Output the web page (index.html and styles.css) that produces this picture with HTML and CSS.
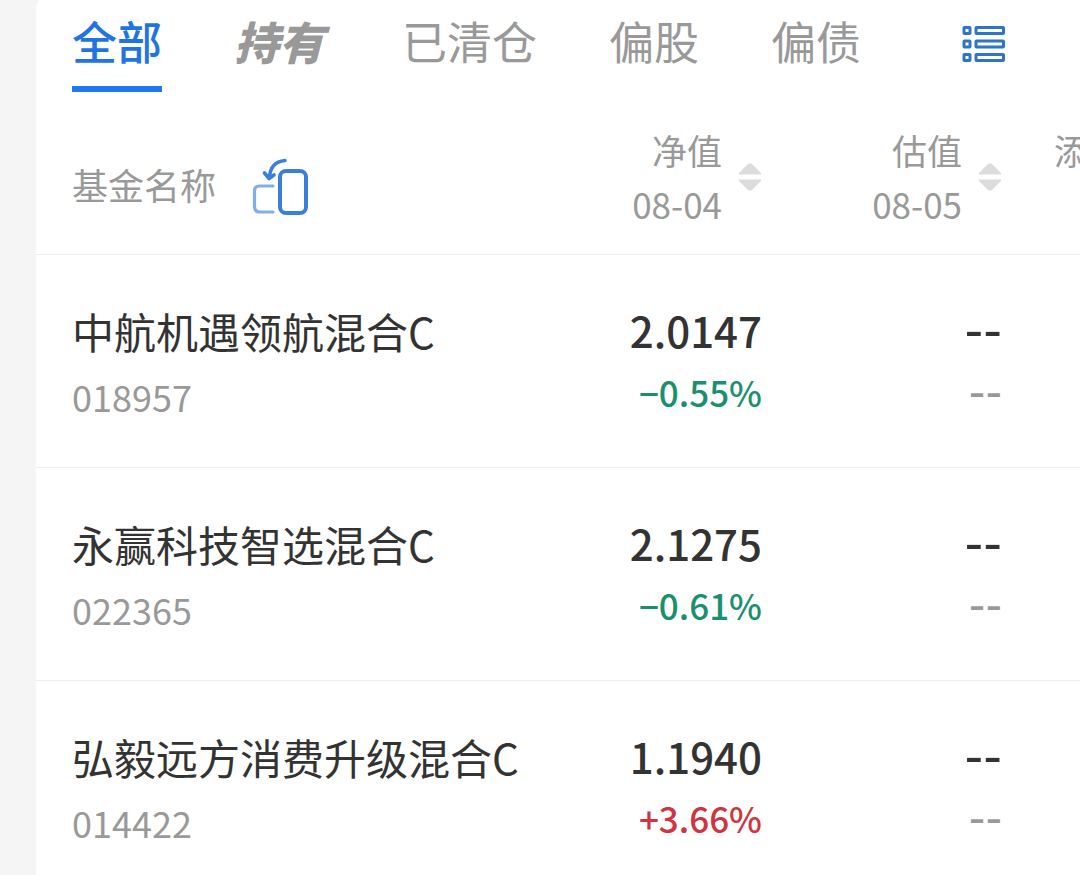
FILE: index.html
```html
<!DOCTYPE html>
<html lang="zh-CN">
<head>
<meta charset="UTF-8">
<meta name="viewport" content="width=device-width, initial-scale=1">
<title>自选基金</title>
<link rel="stylesheet" href="styles.css">
</head>
<body>

<main class="card">
  <nav class="tabs">
    <button type="button" class="tab active">全部</button>
    <button type="button" class="tab hold">持有</button>
    <button type="button" class="tab">已清仓</button>
    <button type="button" class="tab">偏股</button>
    <button type="button" class="tab">偏债</button>
    <button type="button" class="list-btn" aria-label="列表">
      <svg width="44" height="38" viewBox="0 0 44 38" fill="none" stroke="#2f74c8" stroke-width="3">
        <rect x="2" y="2.500" width="6" height="6" rx="0.500"/>
        <rect x="14" y="2.500" width="27.500" height="6" rx="0.500"/>
        <rect x="2" y="16" width="6" height="6" rx="0.500"/>
        <rect x="14" y="16" width="27.500" height="6" rx="0.500"/>
        <rect x="2" y="29.500" width="6" height="6" rx="0.500"/>
        <rect x="14" y="29.500" width="27.500" height="6" rx="0.500"/>
      </svg>
    </button>
  </nav>

  <table class="funds">
    <thead>
      <tr>
        <th class="col-name">
          <div class="name-head">
            <span>基金名称</span>
            <button type="button" class="rotate-btn" aria-label="横屏">
              <svg width="58" height="64" viewBox="0 0 58 64" fill="none" stroke-linecap="round" stroke-linejoin="round">
                <path d="M21 34H7.500Q2.500 34 2.500 39V54Q2.500 60 7.500 60H21" stroke="#84aeea" stroke-width="3.200"/>
                <rect x="28" y="19" width="26" height="42" rx="6" stroke="#3b7fdc" stroke-width="4"/>
                <path d="M33 8.500Q18 10 17.500 26M12.500 21L17 26.500L22 23" stroke="#3b7fdc" stroke-width="3.600"/>
              </svg>
            </button>
          </div>
        </th>
        <th class="col-num">
          <div class="num-head">
            <span>净值<br>08-04</span>
            <button type="button" class="sort-btn" aria-label="净值排序">
              <svg width="24" height="30" viewBox="0 0 24 30" fill="#dcdcdc">
                <path d="M1 12.500V11L10 2Q12 0.500 14 2L23 11V12.500Z"/>
                <path d="M1 17.500V19L10 28Q12 29.500 14 28L23 19V17.500Z"/>
              </svg>
            </button>
          </div>
        </th>
        <th class="col-num">
          <div class="num-head">
            <span>估值<br>08-05</span>
            <button type="button" class="sort-btn" aria-label="估值排序">
              <svg width="24" height="30" viewBox="0 0 24 30" fill="#dcdcdc">
                <path d="M1 12.500V11L10 2Q12 0.500 14 2L23 11V12.500Z"/>
                <path d="M1 17.500V19L10 28Q12 29.500 14 28L23 19V17.500Z"/>
              </svg>
            </button>
          </div>
        </th>
        <th class="col-more">添</th>
      </tr>
    </thead>
    <tbody>
      <tr>
        <td class="col-name">
          <div class="name">中航机遇领航混合C</div>
          <div class="code">018957</div>
        </td>
        <td class="col-num">
          <div class="value">2.0147</div>
          <div class="rate down">−0.55%</div>
        </td>
        <td class="col-num">
          <div class="value empty">--</div>
          <div class="rate empty">--</div>
        </td>
        <td></td>
      </tr>
      <tr>
        <td class="col-name">
          <div class="name">永赢科技智选混合C</div>
          <div class="code">022365</div>
        </td>
        <td class="col-num">
          <div class="value">2.1275</div>
          <div class="rate down">−0.61%</div>
        </td>
        <td class="col-num">
          <div class="value empty">--</div>
          <div class="rate empty">--</div>
        </td>
        <td></td>
      </tr>
      <tr>
        <td class="col-name">
          <div class="name">弘毅远方消费升级混合C</div>
          <div class="code">014422</div>
        </td>
        <td class="col-num">
          <div class="value">1.1940</div>
          <div class="rate up">+3.66%</div>
        </td>
        <td class="col-num">
          <div class="value empty">--</div>
          <div class="rate empty">--</div>
        </td>
        <td></td>
      </tr>
    </tbody>
  </table>
</main>

</body>
</html>
```
FILE: styles.css
```css
* {
  box-sizing: border-box;
}
body {
  margin: 0;
  background: #f5f5f5;
  color: #333;
  font-family: "Noto Sans CJK SC", sans-serif;
  overflow: hidden;
}
button {
  padding: 0;
  border: none;
  background: none;
  color: inherit;
  font-family: inherit;
  cursor: pointer;
}
svg {
  display: block;
}
.card {
  margin-left: 36px;
  min-height: 100vh;
  background: #fff;
  border-radius: 4px 0 0 0 / 12px 0 0 0;
}

/* 顶部分类 */
.tabs {
  display: flex;
  gap: 72px;
  height: 92px;
  padding: 0 74px 0 36px;
}
.tab {
  flex: none;
  height: 92px;
  padding-bottom: 4px;
  border-bottom: 6px solid transparent;
  color: #999;
  font-size: 45px;
  line-height: 82px;
}
.tab.active {
  color: #1f74e4;
  border-bottom-color: #1f78f0;
  font-weight: 500;
}
.tab.hold {
  width: 96px;
  font-weight: 900;
  font-style: italic;
  text-align: left;
}
.list-btn {
  height: 88px;
  margin-left: auto;
}

/* 基金列表 */
.funds {
  width: 100%;
  table-layout: fixed;
  border-collapse: collapse;
}
.funds th,
.funds td {
  padding: 0;
  vertical-align: top;
  text-align: left;
  font-weight: 400;
  white-space: nowrap;
}
.funds th {
  height: 162px;
  padding-top: 31px;
  border-bottom: 1px solid #eee;
  color: #999;
  font-size: 35px;
  line-height: 54px;
}
.funds td {
  height: 213px;
  padding-top: 43px;
  border-bottom: 1px solid #eee;
}
.funds .col-name {
  padding-left: 36px;
}
.funds .col-num {
  width: 240px;
  text-align: right;
}
.funds .col-more {
  width: 78px;
  padding-left: 52px;
}
.name-head,
.num-head {
  display: flex;
  align-items: center;
}
.name-head {
  gap: 36px;
  height: 122px;
  font-size: 36px;
}
.num-head {
  justify-content: flex-end;
  gap: 16px;
}
.name {
  font-size: 42px;
  line-height: 66px;
}
.code {
  color: #999;
  font-size: 36px;
  line-height: 64px;
}
.value {
  font-size: 42px;
  font-weight: 500;
  line-height: 64px;
}
.rate {
  font-size: 35px;
  font-weight: 500;
  line-height: 60px;
}
.down {
  color: #1a9070;
}
.up {
  color: #d03440;
}
.value.empty,
.rate.empty {
  font-family: "DejaVu Sans", sans-serif;
  font-weight: 400;
}
.value.empty {
  font-size: 52px;
}
.rate.empty {
  color: #999;
  font-size: 46px;
}
```
